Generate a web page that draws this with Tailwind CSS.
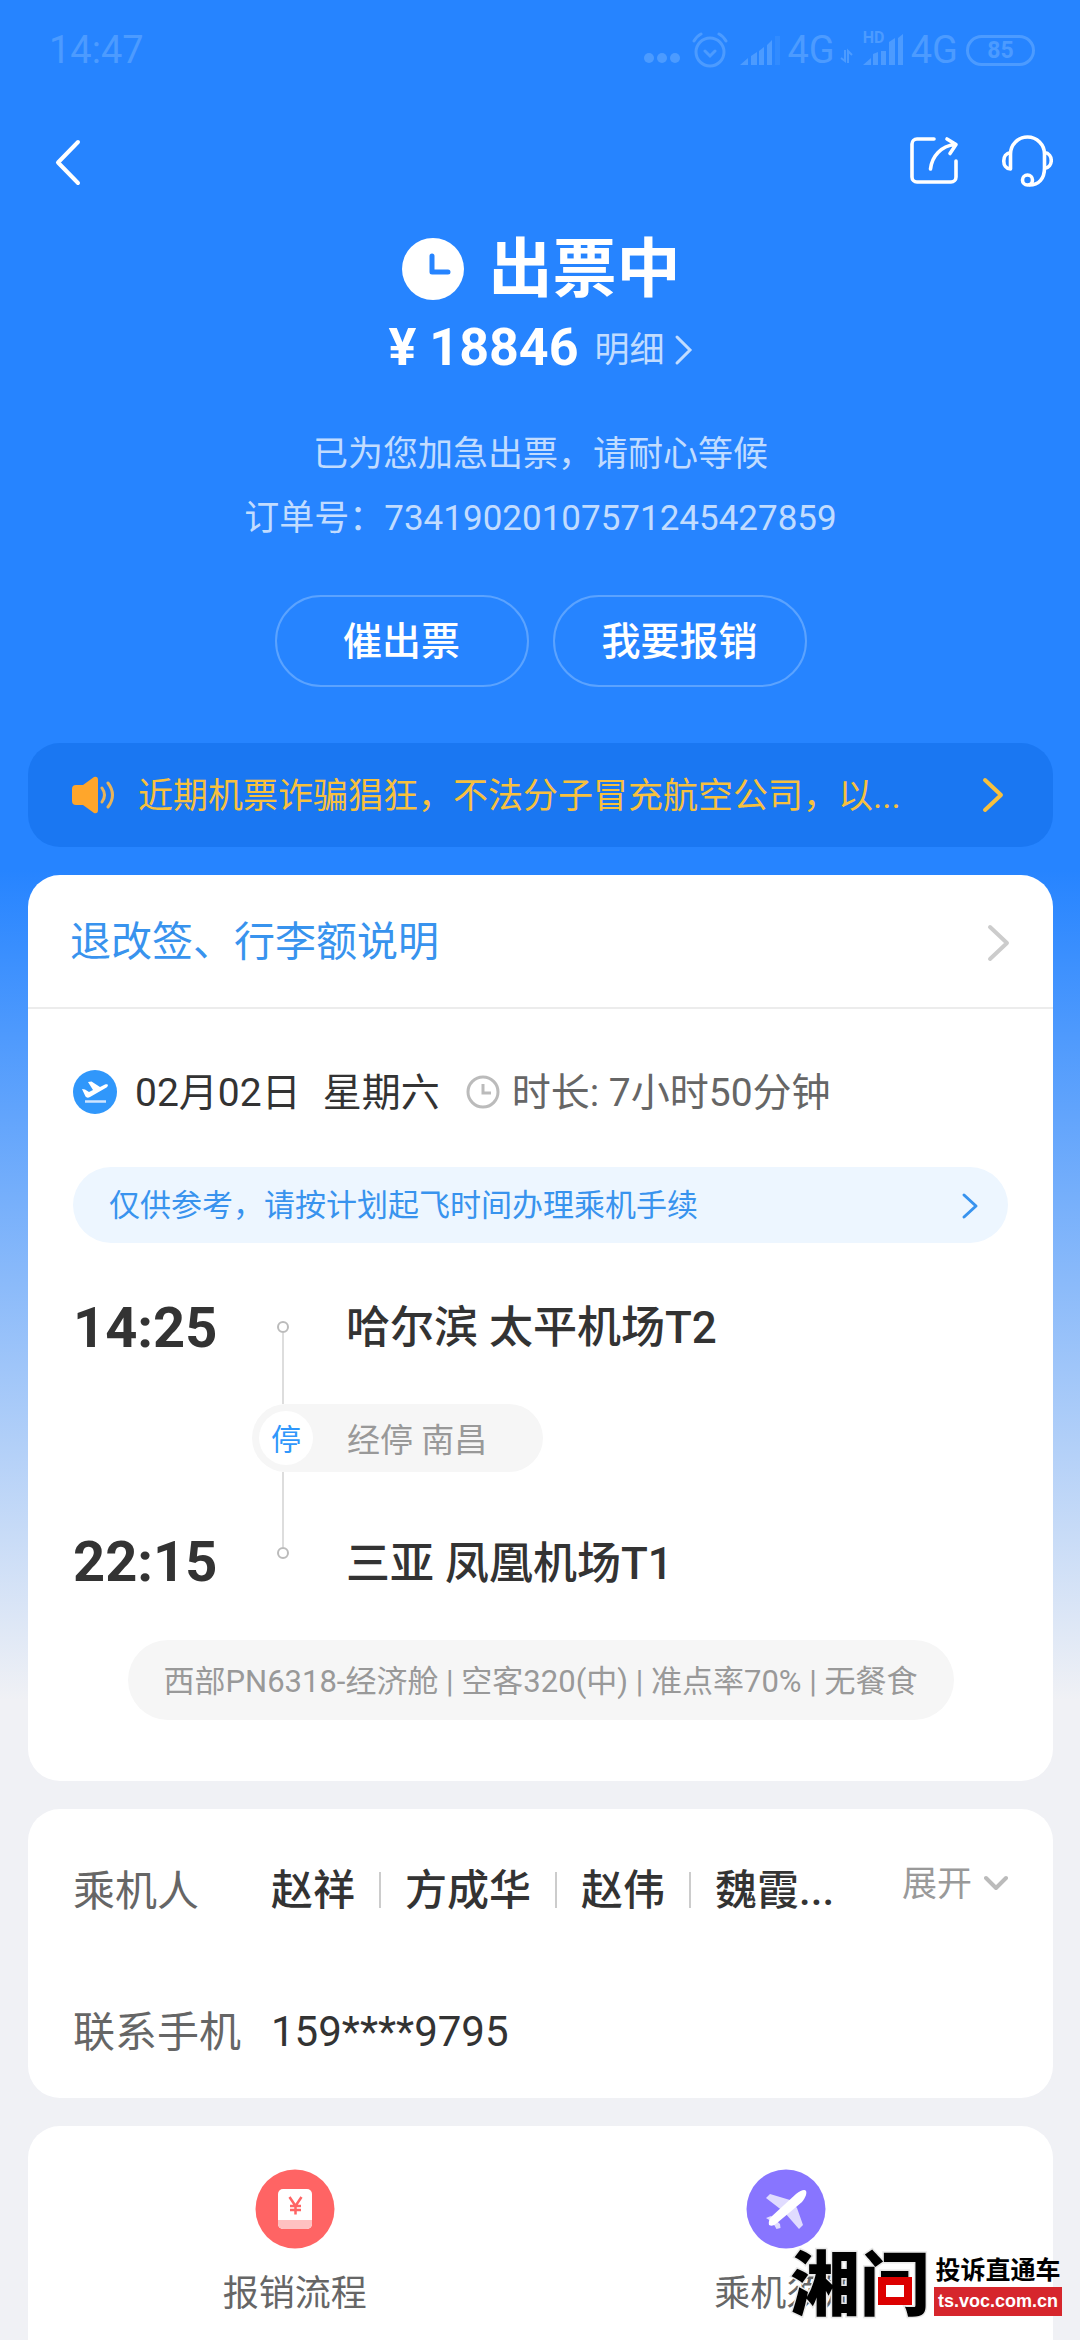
<!DOCTYPE html>
<html lang="zh-CN">
<head>
<meta charset="utf-8">
<meta name="viewport" content="width=device-width, initial-scale=1">
<title>订单详情</title>
<script src="https://cdn.jsdelivr.net/npm/@tailwindcss/browser@4"></script>
</head>
<body class="bg-[#f0f1f5] font-[Roboto,'Noto_Sans_CJK_SC',sans-serif]">
<div class="relative flex min-h-screen flex-col overflow-hidden bg-[linear-gradient(180deg,#2684ff_870px,#f0f1f5_1700px)] pr-[27px] pl-7">

  <!-- Status bar -->
  <div class="flex h-[100px] items-center justify-between pr-[18px] pl-[21px] text-[38px] leading-none text-[#4c9bff]">
    <span>14:47</span>
    <div class="flex items-center">
      <svg class="mt-4 h-3 w-9" viewBox="0 0 36 12" fill="currentColor"><circle cx="5" cy="6" r="5"/><circle cx="18" cy="6" r="5"/><circle cx="31" cy="6" r="5"/></svg>
      <svg class="ml-3 h-9 w-9" viewBox="0 0 36 36" fill="none" stroke="currentColor" stroke-width="3" stroke-linecap="round"><circle cx="18" cy="20" r="14"/><path d="M13 19l5 5 5-5M2 9q3-5 7-7M34 9q-3-5-7-7"/></svg>
      <svg class="ml-3 h-8 w-10" viewBox="0 0 40 32" fill="currentColor"><path d="M0 31l8-7v7zM11 31V22l6-4v13zM19 31V17l5-4v18zM27 31V11l5-5v25z"/><path d="M35 2h5v29h-5z" opacity=".3"/></svg>
      <span class="ml-2">4G</span>
      <svg class="mt-3 ml-1 h-4 w-4" viewBox="0 0 16 16" fill="none" stroke="currentColor" stroke-width="2"><path d="M6 2v11L2 10M9 15V3l4 4"/></svg>
      <div class="relative ml-2 h-8 w-10">
        <svg class="h-8 w-10" viewBox="0 0 40 32" fill="currentColor"><path d="M0 31l8-7v7zM10 31V20l5-2v13zM18 31V17h5v14zM26 31V8l6-4v27zM35 31V4l5-4v31z"/></svg>
        <span class="absolute -top-1 left-0 text-[16px] leading-none font-bold">HD</span>
      </div>
      <span class="ml-2">4G</span>
      <span class="ml-2 flex h-[31px] w-[69px] items-center justify-center rounded-full border-3 border-current text-[23px] leading-none font-bold">85</span>
    </div>
  </div>

  <!-- Navigation -->
  <nav class="flex h-[124px] items-center justify-between text-white">
    <button type="button" aria-label="返回" class="ml-6"><svg class="h-12 w-8" viewBox="0 0 32 48" fill="none" stroke="currentColor" stroke-width="4" stroke-linecap="round" stroke-linejoin="round"><path d="M26 4L6 24.500 26 45"/></svg></button>
    <div class="flex items-center gap-10">
      <button type="button" aria-label="分享"><svg class="h-[54px] w-[54px]" viewBox="0 0 54 54" fill="none" stroke="#fff" stroke-width="3.600" stroke-linecap="round" stroke-linejoin="round"><path d="M29 4H12a5 5 0 0 0-5 5v33a5 5 0 0 0 5 5h34a5 5 0 0 0 5-5V26M25.500 34C27 21 36 11 50 9.500M42 4l9 5.500-6 9"/></svg></button>
      <button type="button" aria-label="客服"><svg class="h-[54px] w-[54px]" viewBox="0 0 54 54" fill="none" stroke="#fff" stroke-width="3.600" stroke-linecap="round" stroke-linejoin="round"><path d="M11.500 34V19a17 17 0 0 1 34 0v14c0 11-6 17-15 17M11.500 17.500c-9 1-9 16 0 16.500M45.500 17.500c9 1 9 15 0 16"/><circle cx="28.500" cy="45" r="5"/></svg></button>
    </div>
  </nav>

  <!-- Order state -->
  <header class="flex flex-col items-center text-[#c1dcff]">
    <div class="mt-[6px] flex h-20 items-center gap-6 text-white">
      <svg class="h-16 w-16" viewBox="0 0 64 64"><circle cx="32" cy="31" r="31" fill="#fff"/><path d="M31 18v16h16" fill="none" stroke="#2684ff" stroke-width="5" stroke-linecap="round" stroke-linejoin="round"/></svg>
      <h1 class="text-[64px] leading-none font-bold">出票中</h1>
    </div>
    <div class="flex h-[76px] items-center gap-4">
      <span class="text-[52px] leading-none font-bold text-white">¥ 18846</span>
      <a href="#" class="flex items-center gap-2 pt-1 text-[35px] leading-none">明细<svg class="h-8 w-5" viewBox="0 0 20 32" fill="none" stroke="currentColor" stroke-width="3" stroke-linecap="round"><path d="M4 3l13 13L4 29"/></svg></a>
    </div>
    <p class="mt-[37px] text-[35px] leading-[64px]">已为您加急出票，请耐心等候</p>
    <p class="text-[35px] leading-[64px]">订单号：73419020107571245427859</p>
    <div class="mt-11 flex gap-6 text-[39px] font-medium text-white">
      <button type="button" class="h-[92px] w-[254px] rounded-full border-2 border-[#5ba3ff] pt-[2px]">催出票</button>
      <button type="button" class="h-[92px] w-[254px] rounded-full border-2 border-[#5ba3ff] pt-[2px]">我要报销</button>
    </div>
  </header>

  <!-- Fraud warning -->
  <a href="#" class="mt-14 flex h-[104px] items-center rounded-[32px] bg-[#1a77f2] px-11 text-[#f7c03e]">
    <svg class="h-10 w-11" viewBox="0 0 44 40"><path d="M4 10h7L22 2q4-1 4 3v30q0 4-4 3l-11-8H4q-4 0-4-4V14q0-4 4-4z" fill="#ffa62b"/><path d="M30 13q5 7 0 14M36 8q9 12 0 24" fill="none" stroke="#e8b45a" stroke-width="3" stroke-linecap="round"/></svg>
    <span class="ml-[22px] pt-1 text-[35px]">近期机票诈骗猖狂，不法分子冒充航空公司，以...</span>
    <svg class="mr-1 ml-auto h-9 w-6" viewBox="0 0 24 36" fill="none" stroke="currentColor" stroke-width="4" stroke-linecap="round" stroke-linejoin="round"><path d="M4 3l16 15L4 33"/></svg>
  </a>

  <main class="mt-7 flex grow flex-col gap-7">
    <!-- Flight -->
    <section class="rounded-[32px] bg-white pb-[61px]">
      <a href="#" class="flex h-[134px] items-center justify-between border-b-2 border-[#ececec] px-[42px] pt-1 text-[41px] text-[#3893ee]">退改签、行李额说明
        <svg class="h-10 w-6" viewBox="0 0 24 40" fill="none" stroke="#ccc" stroke-width="4" stroke-linecap="round" stroke-linejoin="round"><path d="M3 4l17 16L3 36"/></svg>
      </a>
      <div class="px-[45px]">
        <div class="mt-[55px] flex h-14 items-center text-[39px] text-[#333]">
          <svg class="h-11 w-11" viewBox="0 0 44 44"><circle cx="22" cy="22" r="22" fill="#3097fb"/><path d="M12 31.500h21" stroke="#cfe5ff" stroke-width="2.500"/><path d="M9 19l3 .5 4 2.500 4-2-5-8 3.500-.5 8.500 5.500 5-2.500c3-1 4 1 1.500 3L17 27q-3 1.500-4.500-.5z" fill="#fff"/></svg>
          <span class="ml-[18px] pt-[2px]">02月02日</span>
          <span class="ml-[22px] pt-[2px]">星期六</span>
          <svg class="ml-[26px] h-[34px] w-[34px]" viewBox="0 0 34 34" fill="none" stroke="#bbb" stroke-width="3"><circle cx="17" cy="17" r="15"/><path d="M17 9v9h8"/></svg>
          <span class="ml-3 pt-[2px] text-[#666]">时长: 7小时50分钟</span>
        </div>
        <a href="#" class="mt-[47px] flex h-[76px] items-center justify-between rounded-full bg-[#edf6ff] pt-[2px] pr-7 pl-9 text-[31px] text-[#3893ee]">仅供参考，请按计划起飞时间办理乘机手续
          <svg class="h-7 w-5" viewBox="0 0 20 28" fill="none" stroke="currentColor" stroke-width="3" stroke-linecap="round" stroke-linejoin="round"><path d="M4 3l12 11L4 25"/></svg>
        </a>

        <div class="mt-[57px] text-[#333]">
          <div class="flex h-14 items-center">
            <time class="w-[179px] text-[56px] leading-none font-bold">14:25</time>
            <div class="flex h-full w-[62px] flex-col items-center pt-[21px]"><i class="h-3 w-3 rounded-full border-2 border-[#bbb]"></i><i class="w-[2px] grow bg-[#ddd]"></i></div>
            <span class="pl-8 text-[44px] leading-none font-medium">哈尔滨 太平机场T2</span>
          </div>
          <div class="ml-[179px] flex h-12 w-[62px] justify-center"><i class="w-[2px] bg-[#ddd]"></i></div>
          <div class="ml-[179px] flex h-[68px] w-[291px] items-center rounded-full bg-[#f6f6f6] pl-[7px] text-[#999]">
            <span class="flex h-[54px] w-[54px] items-center justify-center rounded-full bg-white pt-1 text-[30px] leading-none text-[#3097fb]">停</span>
            <span class="ml-[34px] pt-1 text-[33px] leading-none">经停 南昌</span>
          </div>
          <div class="ml-[179px] flex h-[60px] w-[62px] justify-center"><i class="w-[2px] bg-[#ddd]"></i></div>
          <div class="flex h-14 items-center">
            <time class="w-[179px] pt-1 text-[56px] leading-none font-bold">22:15</time>
            <div class="flex h-full w-[62px] flex-col items-center pb-[29px]"><i class="w-[2px] grow bg-[#ddd]"></i><i class="h-3 w-3 rounded-full border-2 border-[#bbb]"></i></div>
            <span class="pt-2 pl-8 text-[44px] leading-none font-medium">三亚 凤凰机场T1</span>
          </div>
        </div>

        <div class="mt-[52px] flex justify-center">
          <p class="flex h-20 items-center rounded-full bg-[#f6f6f6] px-9 pt-1 text-[31px] whitespace-nowrap text-[#999]">西部PN6318-经济舱 | 空客320(中) | 准点率70% | 无餐食</p>
        </div>
      </div>
    </section>

    <!-- Passengers -->
    <section class="rounded-[32px] bg-white px-[45px] pt-[53px] pb-[39px] text-[42px] text-[#333]">
      <div class="flex h-14 items-center">
        <span class="w-[198px] pt-[2px] text-[#666]">乘机人</span>
        <div class="flex items-center gap-6 font-medium">
          <span>赵祥</span><i class="h-9 w-[2px] bg-[#ccc]"></i><span>方成华</span><i class="h-9 w-[2px] bg-[#ccc]"></i><span>赵伟</span><i class="h-9 w-[2px] bg-[#ccc]"></i><span>魏霞...</span>
        </div>
        <button type="button" class="mb-3 ml-auto flex items-center gap-3 text-[35px] leading-none text-[#999]">展开<svg class="h-5 w-6" viewBox="0 0 24 20" fill="none" stroke="#bbb" stroke-width="4" stroke-linecap="round" stroke-linejoin="round"><path d="M2 4l10 10L22 4"/></svg></button>
      </div>
      <div class="mt-[85px] flex h-14 items-center">
        <span class="w-[198px] pt-[2px] text-[#666]">联系手机</span>
        <span>159****9795</span>
      </div>
    </section>

    <!-- Shortcuts -->
    <section class="grid grow grid-cols-2 rounded-t-[32px] bg-white px-[21px] pt-[43px] text-[36px] leading-[48px] text-[#666]">
      <a href="#" class="flex flex-col items-center gap-[21px]">
        <svg class="h-20 w-20" viewBox="0 0 80 80"><circle cx="40" cy="40" r="39.500" fill="#ff6464"/><rect x="23" y="20" width="34" height="40" rx="5" fill="#fff"/><path d="M23 51h34v4a5 5 0 0 1-5 5H28a5 5 0 0 1-5-5z" fill="#ffc1c1"/><path d="M34.500 28l6 9 6-9M40.500 37v8.500M35 37h11M35 41h11" fill="none" stroke="#ff6464" stroke-width="2.500"/></svg>
        <span>报销流程</span>
      </a>
      <a href="#" class="flex flex-col items-center gap-[21px]">
        <svg class="h-20 w-20" viewBox="0 0 80 80"><circle cx="40" cy="40" r="39.500" fill="#8875ff"/><path d="M20 29l4-4 20 6 7 8 6 17-4 4-14-16-6-5zM20 49l5-2 9 8 .5 4-4 1-4-7z" fill="#e0dbff"/><path d="M23 56q-1-4 2-8l25-23c5-4 9-5 10-3s0 6-4 11L31 54q-4 4-8 2z" fill="#fff"/></svg>
        <span>乘机须知</span>
      </a>
    </section>
  </main>

  <!-- Complaint channel stamp -->
  <div class="absolute right-[18px] bottom-3 flex items-center font-bold text-black">
    <div class="relative mr-1 flex text-[70px] leading-[84px] font-black [paint-order:stroke] [-webkit-text-stroke:3px_#e8e8e8]">湘问
      <span class="absolute right-[18px] bottom-[23px] h-7 w-[34px] border-8 border-[#dc0000] bg-white"></span>
    </div>
    <div class="flex flex-col items-center gap-[2px]">
      <span class="text-[25px] leading-7">投诉直通车</span>
      <span class="h-[29px] bg-[#d6262c] px-1 font-['Liberation_Sans',sans-serif] text-[18px] leading-[29px] text-white">ts.voc.com.cn</span>
    </div>
  </div>
</div>
</body>
</html>
